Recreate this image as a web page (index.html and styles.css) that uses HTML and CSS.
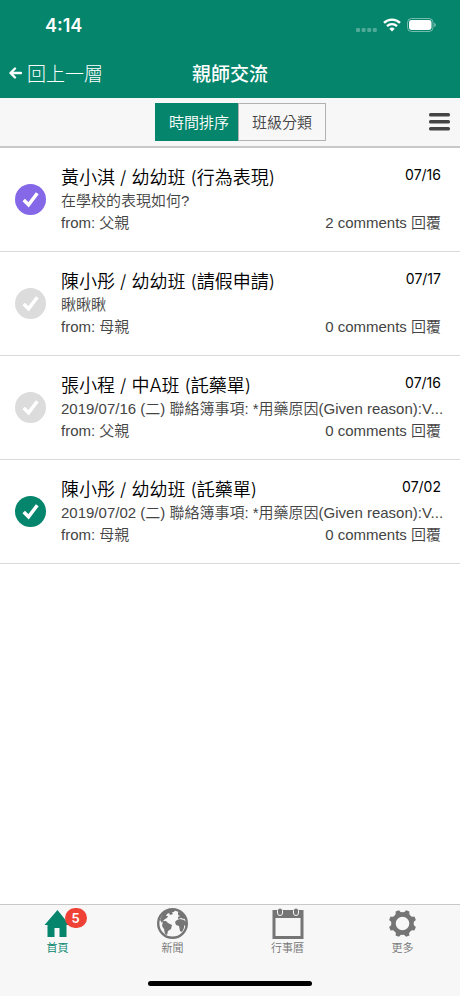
FILE: index.html
```html
<!DOCTYPE html>
<html lang="zh-Hant">
<head>
    <meta charset="UTF-8">
    <meta name="viewport" content="width=device-width, initial-scale=1.0">
    <title>親師交流</title>
    <link rel="stylesheet" href="styles.css">
</head>
<body>
    <svg class="defs" aria-hidden="true">
        <symbol id="check" viewBox="0 0 32 32">
            <circle cx="16" cy="16" r="16" fill="currentColor"/>
            <path d="M9 16.500l5 5 9-12" fill="none" stroke="#fff" stroke-width="3.600"/>
        </symbol>
    </svg>

    <header class="header">
        <div class="status-bar">
            <span class="time">4:14</span>
            <div class="status-icons">
                <svg width="21" height="5" viewBox="0 0 21 5" fill="#fff" fill-opacity=".3">
                    <rect width="4" height="4" y="1" rx="1"/>
                    <rect width="4" height="4" x="5.600" y="1" rx="1"/>
                    <rect width="4" height="4" x="11.200" y="1" rx="1"/>
                    <rect width="4" height="4" x="16.800" y="1" rx="1"/>
                </svg>
                <svg width="18" height="14" viewBox="0 0 18 14" fill="none" stroke="#fff" stroke-width="2.400">
                    <path d="M1 4.900a11.400 11.400 0 0 1 16 0M4 8.100a7.200 7.200 0 0 1 10 0"/>
                    <path d="M9 13.500l-2.700-2.800a3.900 3.900 0 0 1 5.400 0z" fill="#fff" stroke="none"/>
                </svg>
                <svg width="29" height="14" viewBox="0 0 29 14">
                    <rect x=".5" y=".5" width="25.500" height="13" rx="4" fill="none" stroke="#fff" stroke-opacity=".45"/>
                    <rect x="2" y="2" width="22.500" height="10" rx="2.400" fill="#fff"/>
                    <path d="M27.300 4.800v4.400c1-.4 1.500-1.200 1.500-2.200s-.5-1.800-1.500-2.200z" fill="#fff" fill-opacity=".5"/>
                </svg>
            </div>
        </div>
        <nav class="nav-bar">
            <a class="back" href="#">
                <svg width="13" height="12" viewBox="0 0 13 12" fill="none" stroke="#fff" stroke-width="2.400" stroke-linecap="round" stroke-linejoin="round">
                    <path d="M12 6H2M6 1.500L1.500 6l4.500 4.500"/>
                </svg>
                回上一層
            </a>
            <h1 class="page-title">親師交流</h1>
        </nav>
    </header>

    <div class="toolbar">
        <div class="segment">
            <button type="button" class="segment-btn active">時間排序</button>
            <button type="button" class="segment-btn">班級分類</button>
        </div>
        <button type="button" class="menu-btn" aria-label="選單">
            <svg width="22" height="18" viewBox="0 0 22 18" fill="#444">
                <rect width="21" height="3.600" rx="1.500"/>
                <rect width="21" height="3.600" y="7" rx="1.500"/>
                <rect width="21" height="3.600" y="14" rx="1.500"/>
            </svg>
        </button>
    </div>

    <main class="list">
        <a class="row" href="#">
            <svg class="check purple"><use href="#check"/></svg>
            <div class="content">
                <div class="line">
                    <h2 class="name">黃小淇 / 幼幼班 (行為表現)</h2>
                    <time class="date">07/16</time>
                </div>
                <p class="message">在學校的表現如何?</p>
                <div class="line meta"><span>from: 父親</span><span>2 comments 回覆</span></div>
            </div>
        </a>
        <a class="row" href="#">
            <svg class="check"><use href="#check"/></svg>
            <div class="content">
                <div class="line">
                    <h2 class="name">陳小彤 / 幼幼班 (請假申請)</h2>
                    <time class="date">07/17</time>
                </div>
                <p class="message">瞅瞅瞅</p>
                <div class="line meta"><span>from: 母親</span><span>0 comments 回覆</span></div>
            </div>
        </a>
        <a class="row" href="#">
            <svg class="check"><use href="#check"/></svg>
            <div class="content">
                <div class="line">
                    <h2 class="name">張小程 / 中A班 (託藥單)</h2>
                    <time class="date">07/16</time>
                </div>
                <p class="message">2019/07/16 (二) 聯絡簿事項: *用藥原因(Given reason):V...</p>
                <div class="line meta"><span>from: 父親</span><span>0 comments 回覆</span></div>
            </div>
        </a>
        <a class="row" href="#">
            <svg class="check green"><use href="#check"/></svg>
            <div class="content">
                <div class="line">
                    <h2 class="name">陳小彤 / 幼幼班 (託藥單)</h2>
                    <time class="date">07/02</time>
                </div>
                <p class="message">2019/07/02 (二) 聯絡簿事項: *用藥原因(Given reason):V...</p>
                <div class="line meta"><span>from: 母親</span><span>0 comments 回覆</span></div>
            </div>
        </a>
    </main>

    <footer class="footer">
        <nav class="tabs">
            <a class="tab active" href="#">
                <span class="tab-icon">
                    <svg width="32" height="32" viewBox="0 0 32 32" fill="currentColor">
                        <path d="M15.500 2L2.500 17h3v12h7v-9h5v9h7V17h3z"/>
                    </svg>
                    <span class="badge">5</span>
                </span>
                首頁
            </a>
            <a class="tab" href="#">
                <span class="tab-icon">
                    <svg width="32" height="32" viewBox="0 0 32 32" fill="currentColor">
                        <circle cx="15.500" cy="15.500" r="14.300" fill="none" stroke="currentColor" stroke-width="2.400"/>
                        <path d="M6 5l5-3 4-1 3 1-1 2-2 0 1 2-3 1-1-2-2 1-1 2 2 0-1 2-2 1-2 2-1 2-2-3z"/>
                        <path d="M6 13l3 0 2 2 4 2-1 4-3 2-1 4-2-1-1-5-2-3z"/>
                        <path d="M21 4l4 1 4 5-2 1-3-1-3 1 0-2 2-1-2-1zM20 12l3-1 4 1 3 3-1 4-2-2 0 3-2 4-2-1-1-5-3-1-1-3z"/>
                    </svg>
                </span>
                新聞
            </a>
            <a class="tab" href="#">
                <span class="tab-icon">
                    <svg width="32" height="32" viewBox="0 0 32 32">
                        <path d="M.5 2h31v29H.5zM3.500 10V28h25V10z" fill="currentColor" fill-rule="evenodd"/>
                        <rect x="5.500" y="0" width="5" height="7.500" rx="2.500" fill="currentColor" stroke="#f7f7f7"/>
                        <rect x="21.500" y="0" width="5" height="7.500" rx="2.500" fill="currentColor" stroke="#f7f7f7"/>
                    </svg>
                </span>
                行事曆
            </a>
            <a class="tab" href="#">
                <span class="tab-icon">
                    <svg width="32" height="32" viewBox="0 0 32 32" fill="currentColor">
                        <circle cx="15.500" cy="15.500" r="9" fill="none" stroke="currentColor" stroke-width="4.400"/>
                        <g transform="rotate(22.500 15.500 15.500)">
                            <path id="tooth" d="M10.500 6.500q2.800-1.500 3.200-4.700h3.600q.4 3.200 3.200 4.700l-5 1.500z"/>
                            <use href="#tooth" transform="rotate(45 15.500 15.500)"/>
                            <use href="#tooth" transform="rotate(90 15.500 15.500)"/>
                            <use href="#tooth" transform="rotate(135 15.500 15.500)"/>
                            <use href="#tooth" transform="rotate(180 15.500 15.500)"/>
                            <use href="#tooth" transform="rotate(225 15.500 15.500)"/>
                            <use href="#tooth" transform="rotate(270 15.500 15.500)"/>
                            <use href="#tooth" transform="rotate(315 15.500 15.500)"/>
                        </g>
                    </svg>
                </span>
                更多
            </a>
        </nav>
        <div class="home-indicator"></div>
    </footer>
</body>
</html>
```
FILE: styles.css
```css
* {
    box-sizing: border-box;
}

body {
    display: flex;
    flex-direction: column;
    min-height: 100vh;
    margin: 0;
    background-color: #fff;
    color: #000;
    font-family: Inter, "Noto Sans CJK TC", sans-serif;
    font-size: 15px;
    font-weight: 350;
}

a {
    color: inherit;
    text-decoration: none;
}

button {
    font: inherit;
    cursor: pointer;
}

.defs {
    position: absolute;
    width: 0;
    height: 0;
}

/* header */
.header {
    background-color: #04856c;
    color: #fff;
}

.status-bar {
    display: flex;
    justify-content: space-between;
    align-items: center;
    height: 50px;
    padding: 0 24px 0 45px;
}

.time {
    font-size: 18px;
    font-weight: 600;
}

.status-icons {
    display: flex;
    align-items: center;
    gap: 6px;
}

.status-icons svg:first-child {
    align-self: flex-end;
}

.nav-bar {
    display: grid;
    grid-template-columns: 1fr auto 1fr;
    align-items: center;
    height: 48px;
    padding: 0 9px 3px;
}

.back {
    display: flex;
    align-items: center;
    gap: 5px;
    font-size: 19px;
    font-weight: 300;
}

.page-title {
    margin: 0;
    font-size: 19px;
    font-weight: 500;
}

/* sort buttons */
.toolbar {
    display: grid;
    grid-template-columns: 1fr auto 1fr;
    align-items: center;
    height: 50px;
    padding: 0 9px;
    border-bottom: 2px solid #c8c8c8;
    background-color: #f7f7f7;
}

.segment {
    display: flex;
    grid-column: 2;
    margin-left: 21px;
}

.segment-btn {
    width: 88px;
    height: 38px;
    margin-left: -5px;
    padding: 0 0 2px;
    border: 1px solid #b2b2b2;
    background-color: #f7f7f7;
    color: #444;
}

.segment-btn.active {
    margin-left: 0;
    border-color: #04856c;
    background-color: #04856c;
    color: #fff;
}

.menu-btn {
    display: flex;
    justify-self: end;
    padding: 0;
    border: 0;
    background: none;
}

/* messages */
.list {
    flex: 1;
}

.row {
    display: flex;
    align-items: center;
    gap: 15px;
    padding: 17px 19px 17px 15px;
    border-bottom: 1px solid #d9d9d9;
}

.check {
    flex: none;
    width: 31px;
    height: 31px;
    color: #dcdcdc;
}

.check.purple {
    color: #8468e8;
}

.check.green {
    color: #04856c;
}

.content {
    flex: 1;
    min-width: 0;
}

.line {
    display: flex;
    justify-content: space-between;
}

.name {
    margin: 0;
    font-size: 18px;
    font-weight: 350;
    line-height: 25px;
}

.date {
    font-size: 14px;
    font-weight: 400;
    line-height: 20px;
}

.message,
.meta {
    color: #444;
    font-family: "Liberation Sans", "Noto Sans CJK TC", sans-serif;
    line-height: 22px;
}

.message {
    margin: 0 -8px 0 0;
    overflow: hidden;
    text-overflow: ellipsis;
    white-space: nowrap;
}

/* bottom tabs */
.footer {
    border-top: 1px solid #c8c8c8;
    background-color: #f7f7f7;
}

.tabs {
    display: flex;
    padding-top: 3px;
}

.tab {
    display: flex;
    flex: 1;
    flex-direction: column;
    align-items: center;
    color: #757575;
    font-size: 11px;
    line-height: 16px;
}

.tab.active {
    color: #04856c;
}

.tab-icon {
    position: relative;
    height: 32px;
}

.badge {
    position: absolute;
    top: 0;
    left: 23px;
    width: 22px;
    border-radius: 10px;
    background-color: #ef4136;
    color: #fff;
    font-size: 13px;
    font-weight: 600;
    line-height: 20px;
    text-align: center;
}

.home-indicator {
    width: 164px;
    height: 5px;
    margin: 25px auto 10px;
    border-radius: 3px;
    background-color: #000;
}
```
